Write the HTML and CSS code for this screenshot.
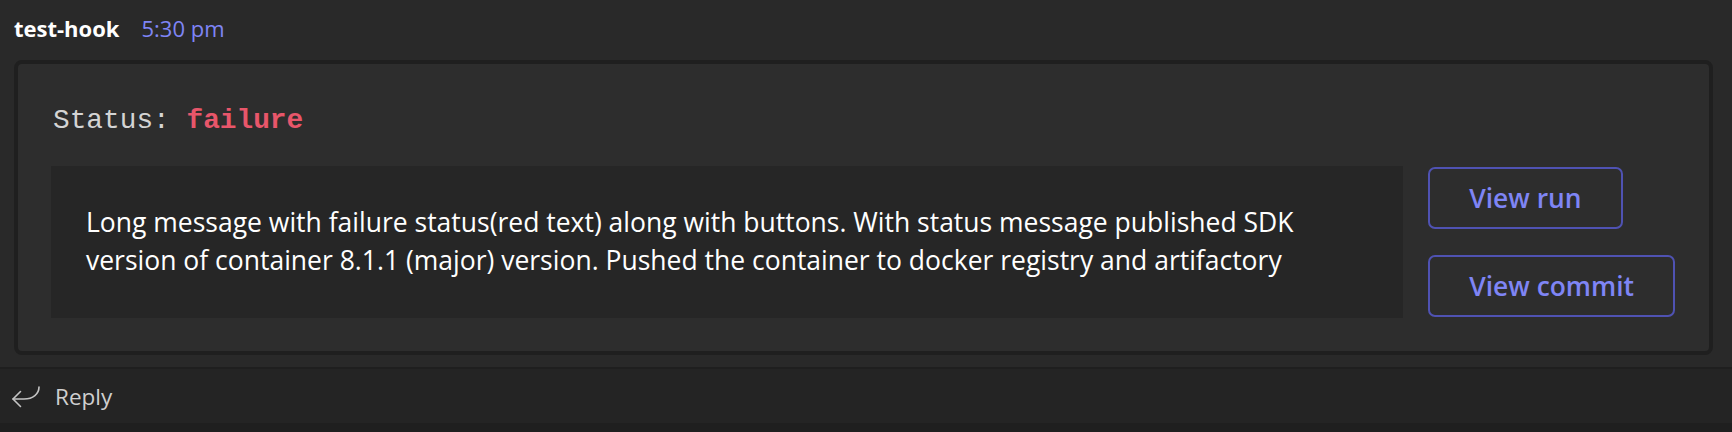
FILE: index.html
```html
<!DOCTYPE html>
<html>
<head>
<meta charset="utf-8">
<link rel="stylesheet" href="styles.css">
</head>
<body>
<div class="page">
  <div class="header">
    <span class="author">test-hook</span>
    <span class="time">5:30 pm</span>
  </div>
  <div class="card">
    <div class="status">Status: <span class="fail">failure</span></div>
    <div class="row">
      <div class="message">
        <p class="msg-text">Long message with failure status(red text) along with buttons. With status message published SDK<br>version of container 8.1.1 (major) version. Pushed the container to docker registry and artifactory</p>
      </div>
      <div class="actions">
        <button class="btn">View run</button>
        <button class="btn">View commit</button>
      </div>
    </div>
  </div>
  <div class="reply-bar">
    <svg class="reply-icon" width="30" height="24" viewBox="0 0 30 24" fill="none" stroke="#c4c4c4" stroke-width="1.6" stroke-linecap="round" stroke-linejoin="round">
      <path d="M28 1 C28 8 22 13 13 13 L2 13"/>
      <path d="M9.5 5.5 L2 13 L9.5 20.5"/>
    </svg>
    <span class="reply-text">Reply</span>
  </div>
  <div class="footer"></div>
</div>
</body>
</html>
```
FILE: styles.css
```css
* { box-sizing: border-box; }
html, body { margin: 0; padding: 0; }
body {
  background: #292929;
  font-family: "Open Sans", "Noto Sans", sans-serif;
  color: #ffffff;
  width: 1732px;
  height: 432px;
  overflow: hidden;
}
.page { display: flex; flex-direction: column; height: 432px; }
.header {
  height: 60px;
  padding: 13px 0 0 14px;
  display: flex;
  align-items: baseline;
  gap: 22px;
  line-height: 30px;
}
.author {
  font-weight: 700;
  font-size: 22px;
  color: #ffffff;
}
.time {
  font-size: 22px;
  color: #7f85f5;
}
.card {
  margin: 0 19px 0 14px;
  background: #2d2d2d;
  border: 4px solid #1f1f1f;
  border-radius: 8px;
  padding: 28px 34px 33px 33px;
  height: 295px;
}
.status {
  font-family: "Liberation Mono", "Courier New", monospace;
  font-size: 27.8px;
  line-height: 40px;
  color: #d4d4d4;
  padding: 9px 0 0 2px;
  height: 74px;
}
.fail { color: #e8566a; font-weight: 700; }
.row {
  display: flex;
  gap: 25px;
  align-items: stretch;
}
.message {
  flex: 1;
  background: #262626;
  height: 152px;
  padding: 0 35px;
  display: flex;
  align-items: center;
}
.msg-text {
  margin: 0;
  font-size: 26.5px;
  line-height: 37.6px;
  color: #ffffff;
  white-space: nowrap;
}
.actions {
  display: flex;
  flex-direction: column;
  align-items: flex-start;
  gap: 26px;
  padding-top: 1px;
}
.btn {
  font-family: "Open Sans", "Noto Sans", sans-serif;
  font-weight: 600;
  font-size: 26.4px;
  color: #7f85f5;
  background: transparent;
  border: 2px solid #4f52b2;
  border-radius: 7px;
  height: 62px;
  padding: 0 39px;
  cursor: pointer;
}
.reply-bar {
  margin-top: 12px;
  border-top: 2px solid #1f1f1f;
  background: #242424;
  height: 56px;
  display: flex;
  align-items: center;
  padding-left: 11px;
  gap: 14px;
}
.reply-icon { display: block; margin-top: 3px; }
.reply-text {
  font-size: 22.5px;
  color: #cfcfcf;
}
.footer { flex: 1; background: #1f1f1f; }
```
